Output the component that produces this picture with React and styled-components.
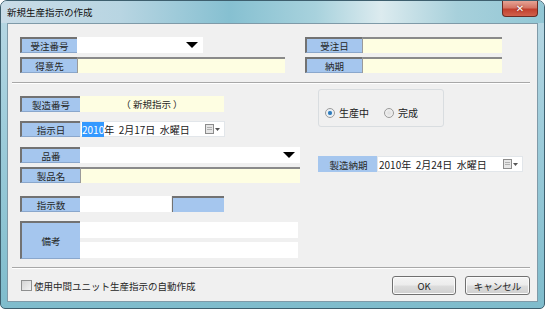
import styled, { createGlobalStyle } from 'styled-components';

const Global = createGlobalStyle`
  html, body { margin: 0; padding: 0; overflow: hidden; background: #ffffff; }
  body { font-family: "Noto Sans CJK JP", "Noto Sans", sans-serif; font-size: 10px; color: #1a1a1a; }
  * { box-sizing: border-box; }
`;

const Window = styled.div`
  width: 545px;
  height: 309px;
  display: flex;
  flex-direction: column;
  border: 1px solid #3e5f6e;
  border-radius: 7px 7px 5px 5px;
  background: linear-gradient(180deg, #b9d8e4 0%, #9fcddb 40%, #7fbccc 100%);
  overflow: hidden;
`;

const TitleBar = styled.div`
  height: 22px;
  flex: none;
  display: flex;
  justify-content: space-between;
  align-items: flex-start;
  background: linear-gradient(90deg, #c9dce7 0%, #b8d5e2 22%, #86c0d1 42%, #a8d2dd 58%, #dcebef 70%, #a7d0db 84%, #92c7d5 100%);
`;

const Title = styled.span`
  margin: 5px 0 0 6px;
  font-size: 9.5px;
  line-height: 12px;
  color: #111;
`;

const CloseButton = styled.div`
  width: 36px;
  height: 16px;
  margin-right: 6px;
  display: flex;
  align-items: center;
  justify-content: center;
  border: 1px solid #6a2b24;
  border-top: none;
  border-radius: 0 0 4px 4px;
  background: linear-gradient(180deg, #e6a394 0%, #d47565 45%, #c2402e 55%, #d0614c 100%);
  color: #fff;
  font-family: "DejaVu Sans", sans-serif;
  font-size: 10px;
  font-weight: bold;
  text-shadow: 0 0 2px #6a1c12;
`;

const Client = styled.div`
  flex: 1;
  margin: 0 6px 6px 6px;
  display: flex;
  flex-direction: column;
  background: #f0f0f0;
  border: 1px solid #7f9aa8;
`;

const TopSection = styled.div`
  display: flex;
  gap: 20px;
  padding: 13px 0 0 12px;
`;

const Group = styled.div`
  width: ${(p) => (p.$w ? `${p.$w}px` : 'auto')};
  display: flex;
  flex-direction: column;
  gap: 4px;
`;

const Row = styled.div`
  display: flex;
  margin-top: ${(p) => p.$mt || 0}px;
`;

const Label = styled.div`
  width: ${(p) => p.$w || 60}px;
  height: ${(p) => p.$h || 16}px;
  flex: none;
  display: flex;
  align-items: center;
  justify-content: center;
  background: #a5c6ee;
  border-left: 2px solid ${(p) => (p.$flat ? '#a5c6ee' : '#727272')};
  border-top: 2px solid ${(p) => (p.$flat ? '#a5c6ee' : '#727272')};
  border-bottom: 1px solid ${(p) => (p.$flat ? '#a5c6ee' : '#8aa7cc')};
  font-size: 9.5px;
  color: #262626;
`;

const Field = styled.div`
  width: ${(p) => p.$w}px;
  height: 16px;
  flex: none;
  display: flex;
  align-items: center;
  justify-content: ${(p) => (p.$center ? 'center' : 'flex-start')};
  background: ${(p) => (p.$yellow ? '#fefee2' : '#ffffff')};
  border-top: ${(p) => (p.$inset ? '2px solid #8a8a8a' : 'none')};
  border-left: ${(p) => (p.$inset ? '1px solid #9a9a9a' : 'none')};
  font-size: 9.5px;
  color: #262626;
`;

const BlueBox = styled.div`
  width: 52px;
  height: 16px;
  margin-left: 1px;
  background: #a5c6ee;
  border-left: 1px solid #727272;
  border-top: 2px solid #727272;
`;

const Combo = styled.div`
  width: ${(p) => p.$w}px;
  height: 16px;
  display: flex;
  justify-content: flex-end;
  align-items: center;
  padding-right: 5px;
  background: #fff;
`;

const Arrow = styled.div`
  width: 0;
  height: 0;
  border-left: 6px solid transparent;
  border-right: 6px solid transparent;
  border-top: 6px solid #000;
`;

const Separator = styled.div`
  margin: ${(p) => p.$mt}px 7px 0 4px;
  border-top: 1px solid #a8a8a8;
  border-bottom: 1px solid #ffffff;
`;

const MiddleSection = styled.div`
  display: flex;
  padding-left: 12px;
`;

const LeftColumn = styled.div`
  width: 280px;
  display: flex;
  flex-direction: column;
  padding-top: 12px;
`;

const RightColumn = styled.div`
  margin-left: 18px;
  padding-top: 5px;
  display: flex;
  flex-direction: column;
`;

const DatePicker = styled.div`
  width: ${(p) => p.$w}px;
  height: 16px;
  display: flex;
  align-items: center;
  padding-left: 1px;
  padding-right: 4px;
  background: #fff;
  border: 1px solid #e2e6ea;
  font-size: 10px;
  color: #222;
  white-space: pre;
`;

const Selected = styled.span`
  background: #3399ff;
  color: #fff;
`;

const DateText = styled.span`
  flex: 1;
`;

const CalIcon = styled.div`
  display: flex;
  align-items: center;
  gap: 1px;
`;

const RemarksFields = styled.div`
  display: flex;
  flex-direction: column;
  gap: 4px;
  padding-top: 1px;
`;

const RadioBox = styled.div`
  width: 126px;
  height: 38px;
  display: flex;
  align-items: flex-end;
  gap: 15px;
  padding: 0 0 6px 6px;
  border: 1px solid #d9dde0;
  border-radius: 3px;
`;

const RadioItem = styled.label`
  display: flex;
  align-items: center;
  gap: 4px;
  font-size: 10px;
  color: #222;
`;

const RadioCircle = styled.span`
  width: 10px;
  height: 10px;
  border-radius: 50%;
  border: 1px solid #9a9a9a;
  background: ${(p) =>
    p.$on
      ? 'radial-gradient(circle, #2f6fa8 0%, #3e8ccc 35%, #e8eef2 40%, #f6f6f6 100%)'
      : 'radial-gradient(circle, #dedede 0%, #f8f8f8 100%)'};
`;

const Footer = styled.div`
  display: flex;
  justify-content: space-between;
  align-items: center;
  padding: 7px 7px 0 13px;
`;

const CheckRow = styled.label`
  display: flex;
  align-items: center;
  gap: 2px;
  font-size: 9.5px;
  color: #262626;
`;

const CheckBox = styled.span`
  width: 11px;
  height: 11px;
  border: 1px solid #8e8f8f;
  background: linear-gradient(135deg, #d4d4d4 0%, #f2f2f2 100%);
`;

const Buttons = styled.div`
  display: flex;
  gap: 9px;
`;

const Button = styled.div`
  width: ${(p) => p.$w}px;
  height: 19px;
  display: flex;
  align-items: center;
  justify-content: center;
  border: 1px solid #707070;
  border-radius: 3px;
  background: linear-gradient(180deg, #f4f4f4 0%, #ececec 48%, #dddddd 52%, #cfcfcf 100%);
  box-shadow: inset 0 0 0 1px #fbfbfb;
  font-size: 9.5px;
  color: #222;
`;

function Calendar() {
  return (
    <CalIcon>
      <svg width="9" height="10" viewBox="0 0 9 10">
        <rect x="0.5" y="0.5" width="8" height="9" fill="#e6e6e6" stroke="#8c8c8c" />
        <rect x="2" y="3" width="5" height="1" fill="#b0b0b0" />
        <rect x="2" y="5" width="5" height="1" fill="#b0b0b0" />
      </svg>
      <svg width="5" height="3" viewBox="0 0 5 3">
        <path d="M0 0 L5 0 L2.5 3 Z" fill="#555" />
      </svg>
    </CalIcon>
  );
}

export default function App() {
  return (
    <>
      <Global />
      <Window>
        <TitleBar>
          <Title>新規生産指示の作成</Title>
          <CloseButton>✕</CloseButton>
        </TitleBar>
        <Client>
          <TopSection>
            <Group $w={265}>
              <Row>
                <Label $w={57}>受注番号</Label>
                <Combo $w={126}><Arrow /></Combo>
              </Row>
              <Row>
                <Label $w={57}>得意先</Label>
                <Field $w={208} $yellow $inset />
              </Row>
            </Group>
            <Group>
              <Row>
                <Label $w={57}>受注日</Label>
                <Field $w={140} $yellow $inset />
              </Row>
              <Row>
                <Label $w={57}>納期</Label>
                <Field $w={140} $yellow $inset />
              </Row>
            </Group>
          </TopSection>

          <Separator $mt={9} />

          <MiddleSection>
            <LeftColumn>
              <Row>
                <Label>製造番号</Label>
                <Field $w={144} $yellow $center>（ 新規指示 ）</Field>
              </Row>
              <Row $mt={9}>
                <Label>指示日</Label>
                <DatePicker $w={145}>
                  <DateText><Selected>2010</Selected>年  2月17日  水曜日</DateText>
                  <Calendar />
                </DatePicker>
              </Row>
              <Row $mt={10}>
                <Label>品番</Label>
                <Combo $w={220}><Arrow /></Combo>
              </Row>
              <Row $mt={4}>
                <Label>製品名</Label>
                <Field $w={220} $yellow $inset />
              </Row>
              <Row $mt={13}>
                <Label>指示数</Label>
                <Field $w={91} />
                <BlueBox />
              </Row>
              <Row $mt={9}>
                <Label $h={38}>備考</Label>
                <RemarksFields>
                  <Field $w={218} />
                  <Field $w={218} />
                </RemarksFields>
              </Row>
            </LeftColumn>
            <RightColumn>
              <RadioBox>
                <RadioItem><RadioCircle $on />生産中</RadioItem>
                <RadioItem><RadioCircle />完成</RadioItem>
              </RadioBox>
              <Row $mt={29}>
                <Label $w={59} $flat>製造納期</Label>
                <DatePicker $w={146}>
                  <DateText>2010年  2月24日  水曜日</DateText>
                  <Calendar />
                </DatePicker>
              </Row>
            </RightColumn>
          </MiddleSection>

          <Separator $mt={8} />

          <Footer>
            <CheckRow><CheckBox />使用中間ユニット生産指示の自動作成</CheckRow>
            <Buttons>
              <Button $w={64}>OK</Button>
              <Button $w={65}>キャンセル</Button>
            </Buttons>
          </Footer>
        </Client>
      </Window>
    </>
  );
}
